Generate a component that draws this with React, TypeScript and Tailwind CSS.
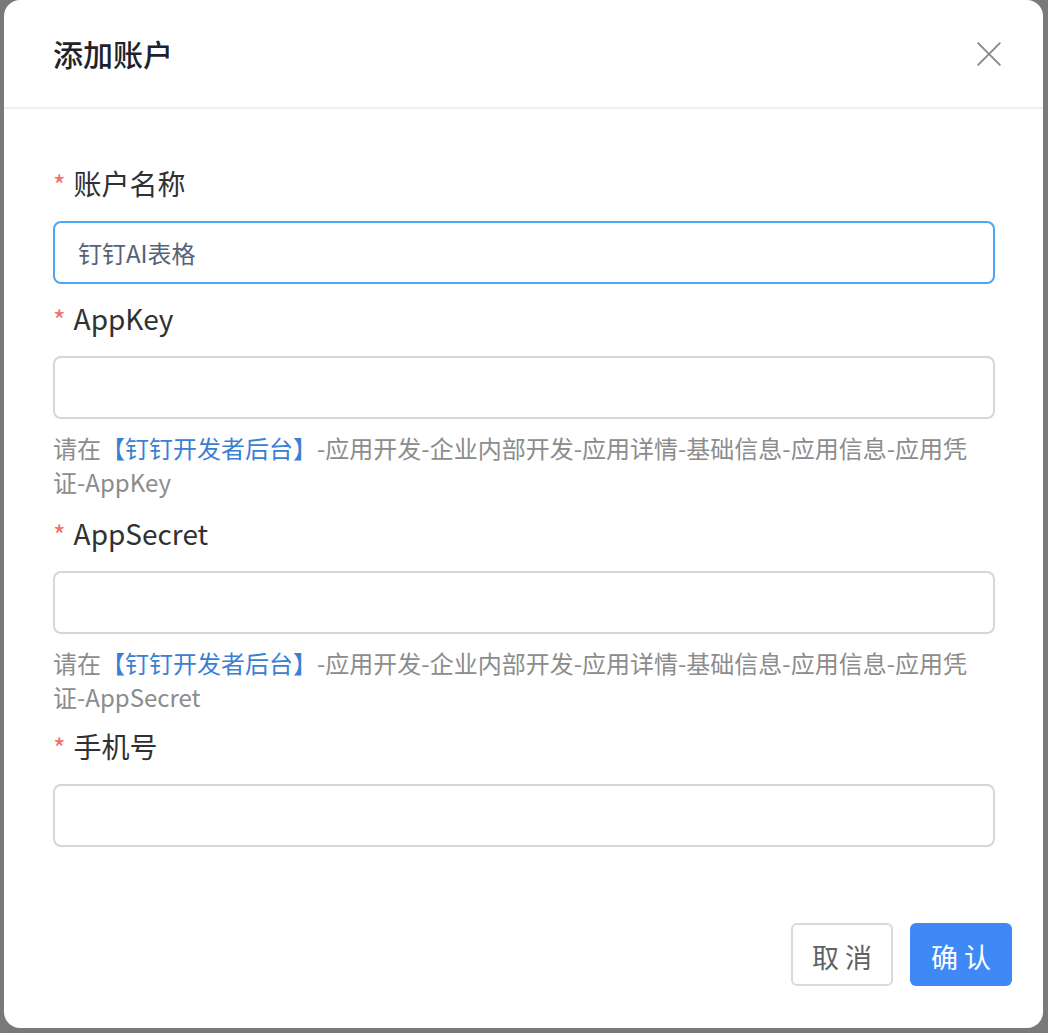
import React, { FunctionComponent } from "react";

const font = { fontFamily: '"Noto Sans CJK SC", "Noto Sans", sans-serif' };

interface FieldProps {
  label: string;
  value?: string;
  focused?: boolean;
  help?: string;
  className?: string;
}

const Field: FunctionComponent<FieldProps> = ({ label, value, focused, help, className }) => {
  return (
    <div className={className}>
      <div className="flex items-center h-[40px] mb-[18px] text-[28px] text-[#303133]">
        <span className="text-[#f56c6c] text-[27px] mr-[8px] mt-[5px]">*</span>
        <span>{label}</span>
      </div>
      <div
        className={
          "h-[63px] rounded-[8px] border-2 flex items-center px-[23px] text-[24px] text-[#56627a] " +
          (focused ? "border-[#4ba6f5]" : "border-[#d6d6d6]")
        }
      >
        {value}
      </div>
      {help && (
        <p className="mt-[12px] text-[24px] leading-[34px] text-[#8c8c8c] pr-[20px]">
          请在<span className="text-[#3a80d2]">【钉钉开发者后台】</span>-应用开发-企业内部开发-应用详情-基础信息-应用信息-应用凭证-{help}
        </p>
      )}
    </div>
  );
};

const App: FunctionComponent = () => {
  return (
    <div className="h-[1033px] bg-[#797979] overflow-hidden" style={font}>
      <div className="ml-[4px] w-[1039px] h-[1028px] bg-white rounded-[16px] flex flex-col">
        <div className="h-[109px] border-b-2 border-[#eeeeee] flex items-center justify-between pl-[49px] pr-[41px]">
          <h1 className="text-[30px] font-medium text-[#1f2329]">添加账户</h1>
          <svg width="26" height="26" viewBox="0 0 24 24" fill="none" stroke="#8a8a8a" strokeWidth="1.8" strokeLinecap="round">
            <path d="M2 2 L22 22 M22 2 L2 22" />
          </svg>
        </div>
        <div className="pt-[54px] pl-[49px] pr-[48px]">
          <Field label="账户名称" value="钉钉AI表格" focused />
          <Field className="mt-[14px]" label="AppKey" help="AppKey" />
          <Field className="mt-[14px]" label="AppSecret" help="AppSecret" />
          <Field className="mt-[12px]" label="手机号" />
        </div>
        <div className="mt-[76px] flex justify-end gap-[17px] pr-[31px]">
          <button className="w-[102px] h-[63px] pt-[6px] rounded-[6px] border-2 border-[#dadada] text-[27px] text-[#5f6266]">
            取 消
          </button>
          <button className="w-[102px] h-[63px] pt-[6px] rounded-[6px] bg-[#3e89f6] text-[27px] text-white">
            确 认
          </button>
        </div>
      </div>
    </div>
  );
};

export default App;
